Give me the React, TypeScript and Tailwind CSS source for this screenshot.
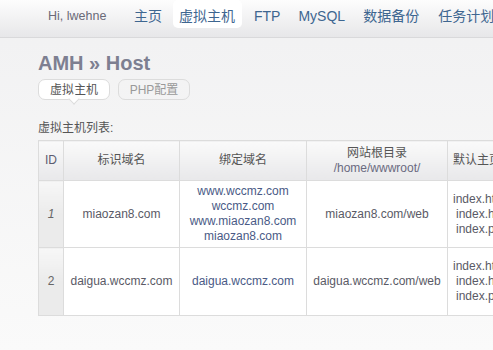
import React from "react";

const font = { fontFamily: '"Liberation Sans", Arial, "Noto Sans CJK SC", sans-serif' };

export default function App() {
  return (
    <div className="w-[493px] h-[350px] overflow-hidden bg-gradient-to-b from-[#f1f1f2] to-[#fafafa]" style={font}>
      {/* nav */}
      <div className="h-[38px] bg-gradient-to-b from-[#fdfdfd] to-[#e7e7e9] border-b border-[#d9d9db] flex items-start whitespace-nowrap">
        <div className="pl-[48px] pt-[7px] text-[12.5px] text-[#6a6a78] w-[120px] shrink-0">Hi, lwehne</div>
        <div className="flex items-start text-[14px] text-[#3e6690]">
          <div className="ml-[14px] pt-[6px] h-[28px]">主页</div>
          <div className="ml-[11px] px-[6px] pt-[6px] h-[28px] w-[69px] bg-white rounded-[5px]">虚拟主机</div>
          <div className="ml-[12px] pt-[6px]">FTP</div>
          <div className="ml-[18px] pt-[6px]">MySQL</div>
          <div className="ml-[18px] pt-[6px]">数据备份</div>
          <div className="ml-[19px] pt-[6px]">任务计划</div>
        </div>
      </div>

      <div className="pl-[38px]">
        <div className="pt-[12px] text-[20px] font-bold text-[#7d7f91] leading-[26px]">AMH » Host</div>
        <div className="flex gap-[8px] mt-[3px]">
          <div className="relative w-[72px] h-[21px] rounded-[7px] border border-[#dcdcdc] bg-white text-[12px] text-[#555] flex items-center justify-center">
            虚拟主机
            <div className="absolute left-[31px] bottom-[-5px] w-[8px] h-[8px] bg-white border-r border-b border-[#dcdcdc] rotate-45 -translate-y-[1px]"></div>
          </div>
          <div className="w-[72px] h-[21px] rounded-[7px] border border-[#dcdcdc] text-[12px] text-[#999] flex items-center justify-center">
            PHP配置
          </div>
        </div>
        <div className="mt-[21px] text-[12px] text-[#555] leading-[15px]">虚拟主机列表:</div>
        <div className="mt-[4px] w-[700px]">
          <table className="table-fixed border-collapse text-[12px] text-[#5a5a66] leading-[15px] text-center">
            <colgroup>
              <col className="w-[25px]" />
              <col className="w-[116px]" />
              <col className="w-[127px]" />
              <col className="w-[141px]" />
              <col className="w-[120px]" />
            </colgroup>
            <thead>
              <tr className="h-[40px]">
                <th className="border border-[#dcdcdc] bg-gradient-to-b from-[#fafafa] to-[#e8e8ea] font-normal text-[#5c5c70]">ID</th>
                <th className="border border-[#dcdcdc] bg-gradient-to-b from-[#fafafa] to-[#e8e8ea] font-normal text-[#555]">标识域名</th>
                <th className="border border-[#dcdcdc] bg-gradient-to-b from-[#fafafa] to-[#e8e8ea] font-normal text-[#555]">绑定域名</th>
                <th className="border border-[#dcdcdc] bg-gradient-to-b from-[#fafafa] to-[#e8e8ea] font-normal text-[#555]">
                  <div>网站根目录</div>
                  <div className="text-[#6a6a80]">/home/wwwroot/</div>
                </th>
                <th className="border border-[#dcdcdc] bg-gradient-to-b from-[#fafafa] to-[#e8e8ea] font-normal text-[#555] text-left pl-[5px]">默认主页</th>
              </tr>
            </thead>
            <tbody>
              <tr className="h-[67px]">
                <td className="border border-[#dcdcdc] bg-gradient-to-b from-[#f7f7f7] via-[#ebebeb] to-[#ebebeb] italic text-[#666]">1</td>
                <td className="border border-[#dcdcdc] bg-white">miaozan8.com</td>
                <td className="border border-[#dcdcdc] bg-white text-[#4a5a86]">
                  <div>www.wccmz.com</div>
                  <div>wccmz.com</div>
                  <div>www.miaozan8.com</div>
                  <div>miaozan8.com</div>
                </td>
                <td className="border border-[#dcdcdc] bg-white">miaozan8.com/web</td>
                <td className="border border-[#dcdcdc] bg-white text-left pl-[5px]">
                  <div>index.html</div>
                  <div className="pl-[3px]">index.htm</div>
                  <div className="pl-[3px]">index.php</div>
                </td>
              </tr>
              <tr className="h-[68px]">
                <td className="border border-[#dcdcdc] bg-gradient-to-b from-[#f7f7f7] via-[#ebebeb] to-[#ebebeb] text-[#666]">2</td>
                <td className="border border-[#dcdcdc] bg-white">daigua.wccmz.com</td>
                <td className="border border-[#dcdcdc] bg-white text-[#4a5a86]">daigua.wccmz.com</td>
                <td className="border border-[#dcdcdc] bg-white">daigua.wccmz.com/web</td>
                <td className="border border-[#dcdcdc] bg-white text-left pl-[5px]">
                  <div>index.html</div>
                  <div className="pl-[3px]">index.htm</div>
                  <div className="pl-[3px]">index.php</div>
                </td>
              </tr>
            </tbody>
          </table>
        </div>
      </div>
    </div>
  );
}
